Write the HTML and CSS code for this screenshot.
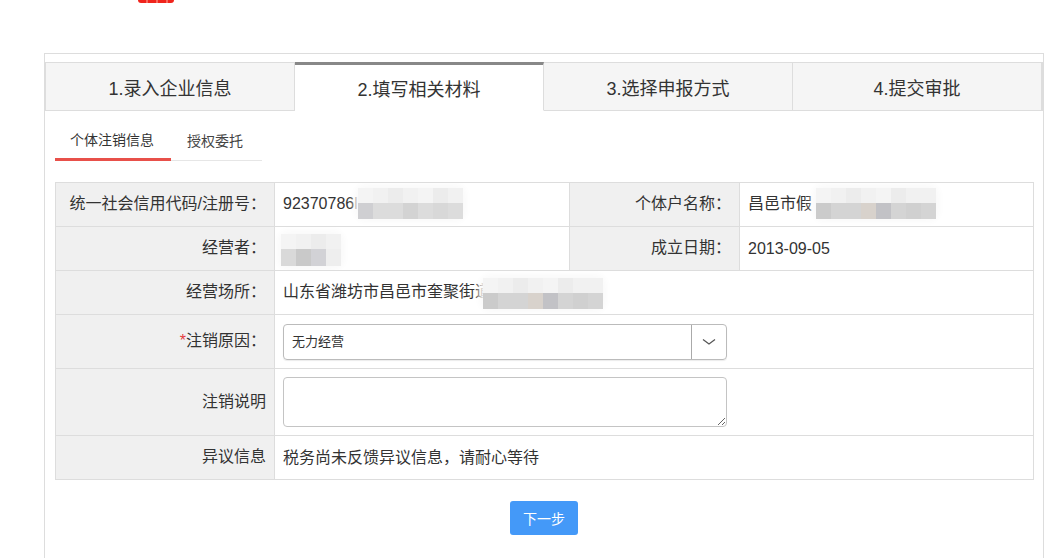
FILE: index.html
```html
<!DOCTYPE html>
<html lang="zh-CN">
<head>
  <meta charset="UTF-8">
  <title>个体注销</title>
  <link rel="stylesheet" href="styles.css">
</head>
<body>
  <div class="top">
    <div class="brand-cut"></div>
  </div>
  <div class="panel">
    <div class="steps">
      <div class="step">1.录入企业信息</div>
      <div class="step active">2.填写相关材料</div>
      <div class="step">3.选择申报方式</div>
      <div class="step">4.提交审批</div>
    </div>

    <div class="subtabs">
      <div class="subtab active">个体注销信息</div>
      <div class="subtab">授权委托</div>
    </div>

    <table class="info">
      <colgroup>
        <col class="c1"><col class="c2"><col class="c3"><col class="c4">
      </colgroup>
      <tr class="r44">
        <td class="label">统一社会信用代码/注册号：</td>
        <td class="value">92370786l<span class="mosaic w7"><i></i><i></i><i></i><i></i><i></i><i></i><i></i><i></i><i></i><i></i><i></i><i></i><i></i><i></i></span></td>
        <td class="label">个体户名称：</td>
        <td class="value">昌邑市假<span class="mosaic w8 part"><i></i><i></i><i></i><i></i><i></i><i></i><i></i><i></i><i></i><i></i><i></i><i></i><i></i><i></i><i></i><i></i></span></td>
      </tr>
      <tr class="r44">
        <td class="label">经营者：</td>
        <td class="value"><span class="mosaic w4 tight"><i></i><i></i><i></i><i></i><i></i><i></i><i></i><i></i></span></td>
        <td class="label">成立日期：</td>
        <td class="value">2013-09-05</td>
      </tr>
      <tr class="r44">
        <td class="label">经营场所：</td>
        <td class="value" colspan="3">山东省潍坊市昌邑市奎聚街道<span class="mosaic w8 pull"><i></i><i></i><i></i><i></i><i></i><i></i><i></i><i></i><i></i><i></i><i></i><i></i><i></i><i></i><i></i><i></i></span></td>
      </tr>
      <tr class="r54">
        <td class="label"><span class="req">*</span>注销原因：</td>
        <td class="value" colspan="3">
          <div class="select">
            <span class="select-text">无力经营</span>
            <span class="select-arrow">
              <svg width="14" height="8" viewBox="0 0 14 8"><path d="M1 1.5 L7 6 L13 1.5" fill="none" stroke="#555" stroke-width="1.2"/></svg>
            </span>
          </div>
        </td>
      </tr>
      <tr class="r67">
        <td class="label">注销说明</td>
        <td class="value" colspan="3"><textarea class="memo"></textarea></td>
      </tr>
      <tr class="r44">
        <td class="label">异议信息</td>
        <td class="value" colspan="3">税务尚未反馈异议信息，请耐心等待</td>
      </tr>
    </table>

    <div class="actions">
      <button class="btn-next">下一步</button>
    </div>
  </div>
</body>
</html>
```

FILE: styles.css
```css
body {
  margin: 0;
  background: #fff;
  font-family: "Liberation Sans", "Noto Sans CJK SC", sans-serif;
  color: #333;
}
.top {
  height: 53px;
  padding-left: 138px;
  box-sizing: border-box;
}
.brand-cut {
  width: 36px;
  height: 3px;
  background: repeating-linear-gradient(90deg, #f0241c 0 8px, #f86a60 8px 10px);
  border-radius: 0 0 3px 3px;
  filter: blur(0.4px);
}
.panel {
  margin-left: 44px;
  width: 1000px;
  height: 505px;
  box-sizing: border-box;
  border: 1px solid #ddd;
  border-bottom: none;
  padding-top: 8px;
}
.steps {
  display: flex;
}
.step {
  flex: 1;
  height: 49px;
  box-sizing: border-box;
  border: 1px solid #ddd;
  border-left-width: 0;
  background: #f5f5f5;
  font-size: 18px;
  color: #333;
  display: flex;
  align-items: center;
  justify-content: center;
}
.step:first-child {
  border-left-width: 1px;
}
.step:last-child {
  border-right-width: 2px;
}
.step.active {
  background: #fff;
  border-top: 3px solid #888;
  border-bottom-color: #fff;
  padding-top: 1px;
}
.subtabs {
  display: inline-flex;
  margin: 0 0 0 10px;
  border-bottom: 1px solid #e6e6e6;
}
.subtab {
  height: 49px;
  box-sizing: border-box;
  padding: 0 16px;
  font-size: 14px;
  color: #444;
  display: flex;
  align-items: center;
  padding-top: 8px;
}
.subtab.active {
  border-bottom: 3px solid #e8504a;
  margin-bottom: -1px;
  height: 50px;
  padding-left: 15px;
  padding-right: 17px;
  color: #333;
}
.subtab + .subtab {
  padding-right: 19px;
}
.info {
  margin: 21px 0 0 10px;
  width: 978px;
  border-collapse: collapse;
  table-layout: fixed;
  font-size: 16px;
  line-height: 20px;
}
.c1 { width: 219px; }
.c2 { width: 295px; }
.c3 { width: 170px; }
.c4 { width: 294px; }
.info td {
  border: 1px solid #ddd;
  vertical-align: middle;
  white-space: nowrap;
  overflow: hidden;
  padding-top: 0;
  padding-bottom: 0;
}
.r44 td { height: 43px; }
.r54 td { height: 53px; }
.r67 td { height: 66px; }
.label {
  background: #f0f0f0;
  text-align: right;
  padding-left: 0;
  padding-right: 8px;
  color: #333;
}
.label::after {
  content: "";
  display: inline-block;
  width: 0;
  height: 23px;
  vertical-align: middle;
}
.value {
  padding-left: 8px;
  padding-right: 0;
  color: #333;
}
.req {
  color: #e4393c;
}
.mosaic {
  display: inline-flex;
  flex-wrap: wrap;
  vertical-align: middle;
  height: 30px;
  margin-top: -4px;
  filter: blur(0.5px);
  border-radius: 8px;
  box-shadow: 0 0 6px 4px #fafafa;
}
.mosaic i {
  width: 15px;
  height: 15px;
  background: #f1f1f1;
}
.mosaic i:nth-child(3n) { background: #ececec; }
.mosaic i:nth-child(4n+1) { background: #f4f4f4; }
.w7 { width: 105px; }
.w7 i:nth-child(n+8) { background: #dcdcdc; height: 16px; }
.w7 i:nth-child(8) { background: #cfcfd2; }
.w7 i:nth-child(11) { background: #d3d3d3; }
.w7 i:nth-child(13) { background: #d8d8d8; }
.w8 { width: 120px; }
.w8 i:nth-child(n+9) { background: #d4d4d4; height: 16px; }
.w8 i:nth-child(9) { background: #cbcbcb; }
.w8 i:nth-child(12) { background: #d8d2cc; }
.w8 i:nth-child(13) { background: #c2c2c6; }
.w8 i:nth-child(15) { background: #d0d0d0; }
.w4 { width: 60px; height: 32px; }
.w4 i:nth-child(n+5) { background: #d9d9d9; height: 17px; }
.w4 i:nth-child(6) { background: #c9c9c9; }
.w4 i:nth-child(7) { background: #d2d2d6; }
.w4 i:nth-child(8) { background: #eeeeee; }
.tight { margin-left: -2px; margin-top: 2px; }
.pull { margin-left: -8px; margin-top: 0; }
.part { margin-left: 4px; }
.select {
  width: 444px;
  height: 36px;
  box-sizing: border-box;
  border: 1px solid #bbb;
  border-radius: 4px;
  display: flex;
  align-items: center;
  box-shadow: 0 1px 1px rgba(0, 0, 0, 0.08);
}
.select-text {
  flex: 1;
  padding-left: 8px;
  font-size: 13px;
  color: #333;
}
.select-arrow {
  width: 34px;
  height: 100%;
  border-left: 1px solid #aaa;
  display: flex;
  align-items: center;
  justify-content: center;
}
.memo {
  display: block;
  width: 444px;
  height: 50px;
  box-sizing: border-box;
  border: 1px solid #c4c4c4;
  border-radius: 4px;
  margin: 0;
  font-family: inherit;
  resize: vertical;
}
.actions {
  display: flex;
  justify-content: center;
  margin-top: 21px;
}
.btn-next {
  width: 68px;
  height: 34px;
  border: none;
  border-radius: 3px;
  background: #4499f8;
  color: #fff;
  font-size: 14px;
  font-family: inherit;
  cursor: pointer;
}
```
